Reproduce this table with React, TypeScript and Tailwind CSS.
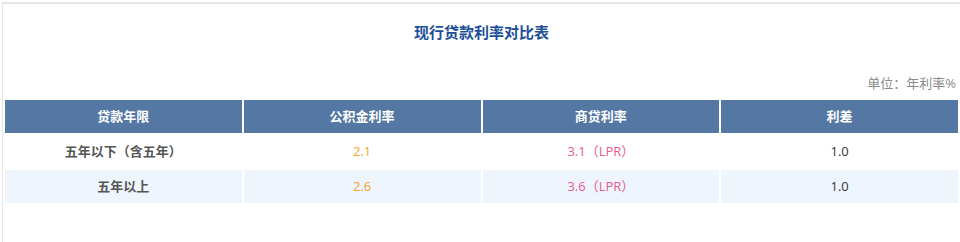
import React from "react";

const rows = [
  { term: "五年以下（含五年）", gjj: "2.1", sd: "3.1（LPR）", diff: "1.0", bg: "bg-white" },
  { term: "五年以上", gjj: "2.6", sd: "3.6（LPR）", diff: "1.0", bg: "bg-[#eef5fd]" },
];

export default function App() {
  return (
    <div
      className="w-[960px] h-[242px] bg-white overflow-hidden"
      style={{ fontFamily: '"Open Sans", "Noto Sans CJK SC", sans-serif' }}
    >
      <div className="mt-[2px] ml-[2px] h-[240px] border-t-2 border-l border-[#e6e6e6] flex flex-col">
        <div className="pt-[18px] h-[20px] box-content text-center text-[15px] leading-[20px] font-bold text-[#1d4f98]">
          现行贷款利率对比表
        </div>
        <div className="mt-[32px] h-[18px] leading-[18px] text-right pr-[4px] text-[13px] text-[#8a8a8a]">
          单位：年利率%
        </div>
        <table className="mt-[6px] w-full table-fixed border-separate border-spacing-[2px] text-[13px]">
          <thead>
            <tr>
              {["贷款年限", "公积金利率", "商贷利率", "利差"].map((h) => (
                <th
                  key={h}
                  className="h-[33px] bg-[#5577a3] text-white font-bold text-center p-0 leading-[33px]"
                >
                  {h}
                </th>
              ))}
            </tr>
          </thead>
          <tbody>
            {rows.map((r) => (
              <tr key={r.term}>
                <td className={`h-[33px] ${r.bg} text-center font-bold text-[#555555] p-0`}>{r.term}</td>
                <td className={`h-[33px] ${r.bg} text-center text-[#f5a033] p-0`}>{r.gjj}</td>
                <td className={`h-[33px] ${r.bg} text-center text-[#ea5a93] p-0`}>{r.sd}</td>
                <td className={`h-[33px] ${r.bg} text-center text-[#333333] p-0`}>{r.diff}</td>
              </tr>
            ))}
          </tbody>
        </table>
      </div>
    </div>
  );
}
